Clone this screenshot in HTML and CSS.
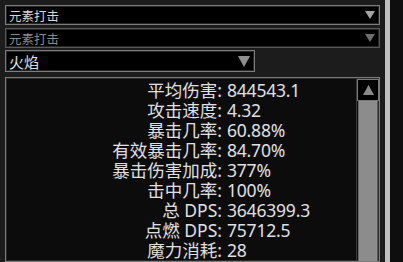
FILE: index.html
```html
<!DOCTYPE html>
<html lang="zh">
<head>
<meta charset="utf-8">
<link rel="stylesheet" href="styles.css">
</head>
<body>
<div class="app">
  <div class="panel">
    <div class="select s1">
      <span class="label">元素打击</span>
      <svg class="arrow" width="10" height="8" viewBox="0 0 10 8"><polygon points="0,0 10,0 5,8" /></svg>
    </div>
    <div class="select s2">
      <span class="label">元素打击</span>
      <svg class="arrow" width="10" height="8" viewBox="0 0 10 8"><polygon points="0,0 10,0 5,8" /></svg>
    </div>
    <div class="select s3">
      <span class="label">火焰</span>
      <svg class="arrow" width="12" height="11" viewBox="0 0 12 11"><polygon points="0,0 12,0 6,11" /></svg>
    </div>
    <div class="output">
      <div class="stats">
        <div class="k">平均伤害:</div><div class="v">844543.1</div>
        <div class="k">攻击速度:</div><div class="v">4.32</div>
        <div class="k">暴击几率:</div><div class="v">60.88%</div>
        <div class="k">有效暴击几率:</div><div class="v">84.70%</div>
        <div class="k">暴击伤害加成:</div><div class="v">377%</div>
        <div class="k">击中几率:</div><div class="v">100%</div>
        <div class="k">总 DPS:</div><div class="v">3646399.3</div>
        <div class="k">点燃 DPS:</div><div class="v">75712.5</div>
        <div class="k">魔力消耗:</div><div class="v">28</div>
      </div>
      <div class="scrollbar">
        <div class="btn">
          <svg width="11" height="10" viewBox="0 0 11 10"><polygon points="5.5,0 11,10 0,10" /></svg>
        </div>
        <div class="track"></div>
      </div>
    </div>
  </div>
  <div class="splitter"></div>
  <div class="right"></div>
</div>
</body>
</html>
```
FILE: styles.css
```css
html, body {
  margin: 0;
  padding: 0;
}
body {
  width: 403px;
  height: 262px;
  overflow: hidden;
  background: #1c1c1c;
  font-family: "Noto Sans", "Noto Sans CJK SC", sans-serif;
}
.app {
  display: flex;
  height: 262px;
}
.panel {
  width: 375px;
  padding: 5px 0 0 5px;
  display: flex;
  flex-direction: column;
}
.select {
  box-sizing: border-box;
  display: flex;
  align-items: center;
  justify-content: space-between;
  background: #000;
  border: 1px solid #7c7c7c;
  box-shadow: inset 0 0 0 1px #262626;
  padding: 0 4px 0 3px;
}
.select .label {
  font-family: "Noto Sans CJK SC", sans-serif;
}
.s1 {
  height: 20px;
  margin-bottom: 3px;
  color: #d6d6d6;
  font-size: 12.5px;
}
.s1 .arrow { fill: #a4a4a4; }
.s2 {
  height: 20px;
  margin-bottom: 2px;
  color: #8a8a8a;
  font-size: 12.5px;
  border-color: #585858;
}
.s2 .arrow { fill: #6e6e6e; }
.s3 {
  width: 250px;
  height: 22px;
  margin-bottom: 5px;
  color: #e2e2e2;
  font-size: 15px;
  padding-right: 4px;
}
.s3 .arrow { fill: #8e8e8e; }
.output {
  box-sizing: border-box;
  height: 200px;
  border: 1px solid #7c7c7c;
  box-shadow: inset 0 0 0 1px #2a2a2a;
  background: #0c0c0c;
  display: flex;
  padding: 1px 0 0 0;
}
.stats {
  flex: 1;
  display: grid;
  grid-template-columns: 216px 1fr;
  grid-auto-rows: 20px;
  column-gap: 5px;
  align-content: start;
  padding-top: 1px;
  color: #e0e0e0;
  font-size: 17.5px;
  line-height: 20px;
}
.k {
  text-align: right;
  white-space: nowrap;
}
.v {
  white-space: nowrap;
  letter-spacing: -0.2px;
}
.scrollbar {
  width: 22px;
  border-left: 1px solid #3a3a3a;
  display: flex;
  flex-direction: column;
}
.btn {
  box-sizing: border-box;
  height: 22px;
  border: 1px solid #7a7a7a;
  background: #000;
  display: flex;
  align-items: center;
  justify-content: center;
}
.btn svg { fill: #8a8a8a; }
.track {
  flex: 1;
  margin: 0 1px;
  background: #8c8c8c;
  border-left: 1px solid #6a6a6a;
  border-right: 1px solid #5a5a5a;
}
.splitter {
  width: 5px;
  margin-left: 5px;
  background: #c0c0c0;
}
.right {
  flex: 1;
  background: #0e0e0e;
}
```
